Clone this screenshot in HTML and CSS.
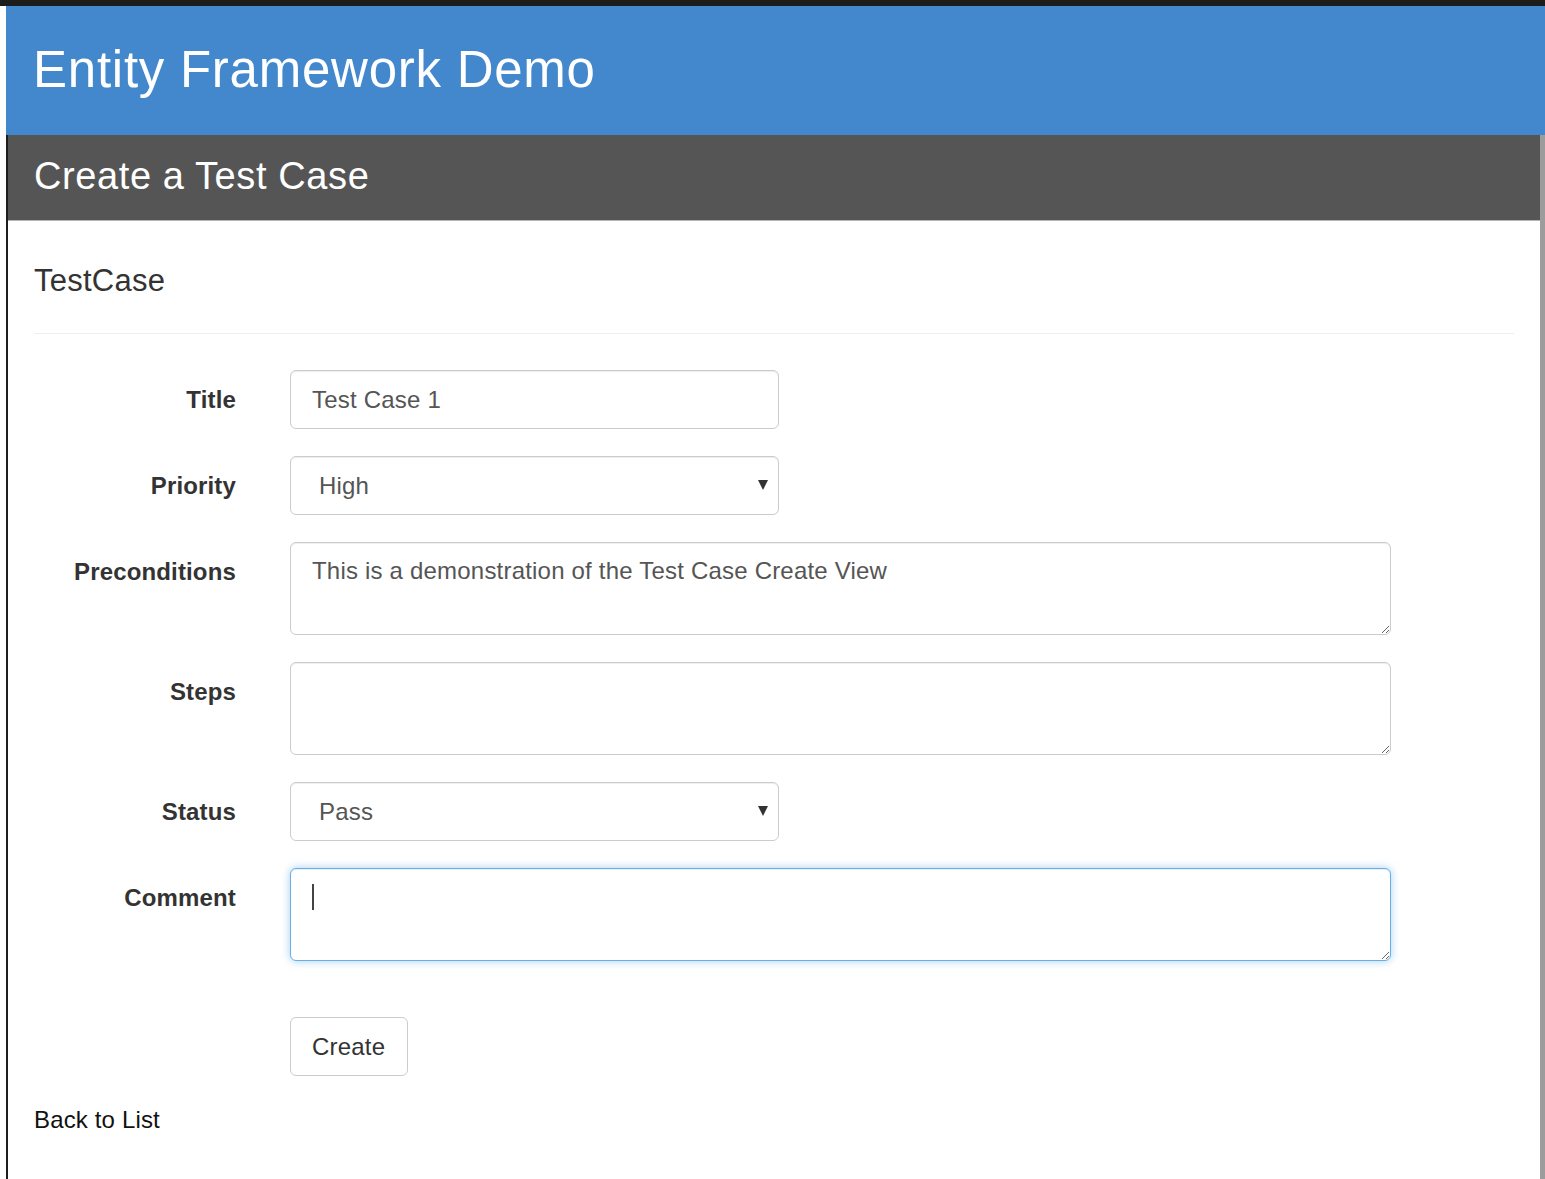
FILE: index.html
```html
<!DOCTYPE html>
<html lang="en">
<head>
<meta charset="utf-8">
<title>Entity Framework Demo</title>
<link rel="stylesheet" href="styles.css">
</head>
<body>
<div class="page">
  <header class="site-header">
    <h1 class="site-title">Entity Framework Demo</h1>
  </header>
  <main class="panel">
    <div class="panel-heading">
      <h2 class="panel-title">Create a Test Case</h2>
    </div>
    <div class="panel-body">
      <h4 class="form-title">TestCase</h4>
      <hr class="divider">
      <form class="form">
        <div class="form-group">
          <label class="control-label">Title</label>
          <div class="control">
            <input class="form-control short" type="text" value="Test Case 1">
          </div>
        </div>
        <div class="form-group">
          <label class="control-label">Priority</label>
          <div class="control">
            <span class="select-wrap short">
              <select class="form-control select">
                <option>High</option>
                <option>Medium</option>
                <option>Low</option>
              </select>
            </span>
          </div>
        </div>
        <div class="form-group">
          <label class="control-label">Preconditions</label>
          <div class="control">
            <textarea class="form-control wide" rows="2">This is a demonstration of the Test Case Create View</textarea>
          </div>
        </div>
        <div class="form-group">
          <label class="control-label">Steps</label>
          <div class="control">
            <textarea class="form-control wide" rows="2"></textarea>
          </div>
        </div>
        <div class="form-group">
          <label class="control-label">Status</label>
          <div class="control">
            <span class="select-wrap short">
              <select class="form-control select">
                <option>Pass</option>
                <option>Fail</option>
              </select>
            </span>
          </div>
        </div>
        <div class="form-group">
          <label class="control-label">Comment</label>
          <div class="control">
            <span class="focus-wrap wide">
              <textarea class="form-control wide focused" rows="2"></textarea>
              <span class="caret"></span>
            </span>
          </div>
        </div>
        <div class="form-group actions">
          <span class="control-label"></span>
          <div class="control">
            <button type="button" class="btn">Create</button>
          </div>
        </div>
      </form>
      <div class="back-link">
        <a href="#" class="link">Back to List</a>
      </div>
    </div>
  </main>
</div>
</body>
</html>
```

FILE: styles.css
```css
* {
  box-sizing: border-box;
}

html, body {
  margin: 0;
  padding: 0;
}

body {
  font-family: "Liberation Sans", Arial, Helvetica, sans-serif;
  background: #ffffff;
  color: #333333;
  border-top: 6px solid #1c1c1c;
}

.page {
  padding-left: 6px;
  min-height: calc(100vh - 6px);
  display: flex;
  flex-direction: column;
}

.site-header {
  background: #4388cc;
  height: 129px;
  display: flex;
  align-items: center;
  padding-left: 27px;
}

.site-title {
  margin: 0;
  font-size: 51px;
  letter-spacing: 0.75px;
  font-weight: normal;
  color: #ffffff;
  line-height: 1;
  padding-bottom: 2px;
}

.panel {
  flex: 1;
  border-left: 2px solid #1e1e1e;
  border-right: 5px solid #9c9c9c;
  display: flex;
  flex-direction: column;
}

.panel-heading {
  background: #555555;
  height: 86px;
  border-bottom: 1px solid #b5b5b5;
  display: flex;
  align-items: center;
  padding-left: 26px;
}

.panel-title {
  margin: 0;
  font-size: 38px;
  letter-spacing: 0.6px;
  font-weight: normal;
  color: #ffffff;
  line-height: 1;
  padding-bottom: 4px;
}

.panel-body {
  flex: 1;
  padding: 0 26px 30px 26px;
}

.form-title {
  margin: 43px 0 0 0;
  font-size: 31px;
  letter-spacing: 0.25px;
  font-weight: normal;
  line-height: 34px;
  color: #333333;
}

.divider {
  margin: 35px 0 36px 0;
  border: 0;
  border-top: 1px solid #eeeeee;
  height: 0;
}

.form {
  display: flex;
  flex-direction: column;
}

.form-group {
  display: flex;
  align-items: flex-start;
  margin-bottom: 27px;
}

.control-label {
  width: 202px;
  flex: none;
  text-align: right;
  font-weight: bold;
  font-size: 24px;
  letter-spacing: 0.15px;
  line-height: 34px;
  padding-top: 13px;
  color: #333333;
}

.control {
  margin-left: 54px;
}

.form-control {
  display: block;
  font-family: "Liberation Sans", Arial, Helvetica, sans-serif;
  font-size: 24px;
  letter-spacing: 0.2px;
  line-height: 34px;
  color: #555555;
  background: #ffffff;
  border: 1px solid #cccccc;
  border-radius: 6px;
  padding: 11px 21px;
  box-shadow: inset 0 1px 1px rgba(0, 0, 0, 0.075);
  margin: 0;
}

.short {
  width: 489px;
}

input.form-control {
  height: 59px;
  padding-top: 12px;
}

.wide {
  width: 1101px;
}

textarea.form-control {
  height: 93px;
  resize: vertical;
}

.select-wrap {
  display: block;
  position: relative;
}

.select {
  -webkit-appearance: none;
  appearance: none;
  width: 100%;
  height: 59px;
  padding-left: 28px;
}

.select-wrap::after {
  content: "";
  position: absolute;
  right: 11px;
  top: 24px;
  width: 0;
  height: 0;
  border-left: 5px solid transparent;
  border-right: 5px solid transparent;
  border-top: 10px solid #333333;
  pointer-events: none;
}

.focus-wrap {
  display: block;
  position: relative;
}

.focused {
  border-color: #66afe9;
  outline: 0;
  box-shadow: inset 0 1px 1px rgba(0, 0, 0, 0.075), 0 0 8px rgba(102, 175, 233, 0.6);
}

.caret {
  position: absolute;
  left: 22px;
  top: 16px;
  width: 2px;
  height: 26px;
  background: #444444;
}

.actions {
  margin-top: 29px;
  margin-bottom: 0;
}

.btn {
  font-family: "Liberation Sans", Arial, Helvetica, sans-serif;
  font-size: 24px;
  letter-spacing: 0.2px;
  line-height: 34px;
  color: #333333;
  background: #ffffff;
  border: 1px solid #cccccc;
  border-radius: 6px;
  padding: 11px 21px;
  height: 59px;
  width: 118px;
  text-align: left;
  cursor: pointer;
}

.back-link {
  margin-top: 27px;
  font-size: 24px;
  letter-spacing: 0.15px;
  line-height: 34px;
}

.link {
  color: #111111;
  text-decoration: none;
}
```
